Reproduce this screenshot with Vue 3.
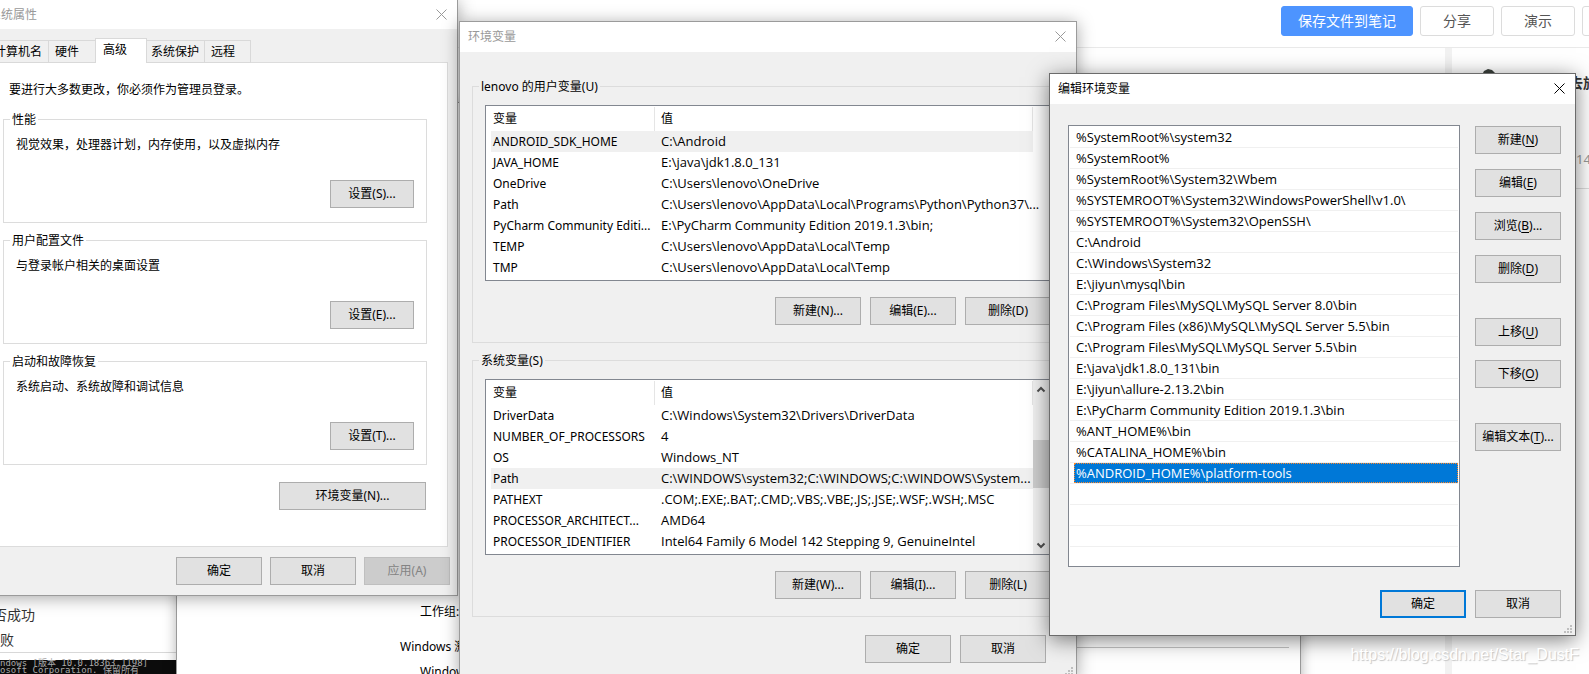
<script setup>
const tabs = ['计算机名', '硬件', '高级', '系统保护', '远程']
const activeTab = '高级'

const settings = [
  { title: '性能', text: '视觉效果，处理器计划，内存使用，以及虚拟内存', button: '设置(S)...' },
  { title: '用户配置文件', text: '与登录帐户相关的桌面设置', button: '设置(E)...' },
  { title: '启动和故障恢复', text: '系统启动、系统故障和调试信息', button: '设置(T)...' },
]

const groups = [
  {
    title: 'lenovo 的用户变量(U)',
    selected: 'ANDROID_SDK_HOME',
    scroll: false,
    buttons: ['新建(N)...', '编辑(E)...', '删除(D)'],
    rows: [
      ['ANDROID_SDK_HOME', 'C:\\Android'],
      ['JAVA_HOME', 'E:\\java\\jdk1.8.0_131'],
      ['OneDrive', 'C:\\Users\\lenovo\\OneDrive'],
      ['Path', 'C:\\Users\\lenovo\\AppData\\Local\\Programs\\Python\\Python37\\...'],
      ['PyCharm Community Editi...', 'E:\\PyCharm Community Edition 2019.1.3\\bin;'],
      ['TEMP', 'C:\\Users\\lenovo\\AppData\\Local\\Temp'],
      ['TMP', 'C:\\Users\\lenovo\\AppData\\Local\\Temp'],
    ],
  },
  {
    title: '系统变量(S)',
    selected: 'Path',
    scroll: true,
    buttons: ['新建(W)...', '编辑(I)...', '删除(L)'],
    rows: [
      ['DriverData', 'C:\\Windows\\System32\\Drivers\\DriverData'],
      ['NUMBER_OF_PROCESSORS', '4'],
      ['OS', 'Windows_NT'],
      ['Path', 'C:\\WINDOWS\\system32;C:\\WINDOWS;C:\\WINDOWS\\System...'],
      ['PATHEXT', '.COM;.EXE;.BAT;.CMD;.VBS;.VBE;.JS;.JSE;.WSF;.WSH;.MSC'],
      ['PROCESSOR_ARCHITECT...', 'AMD64'],
      ['PROCESSOR_IDENTIFIER', 'Intel64 Family 6 Model 142 Stepping 9, GenuineIntel'],
    ],
  },
]

const paths = [
  '%SystemRoot%\\system32',
  '%SystemRoot%',
  '%SystemRoot%\\System32\\Wbem',
  '%SYSTEMROOT%\\System32\\WindowsPowerShell\\v1.0\\',
  '%SYSTEMROOT%\\System32\\OpenSSH\\',
  'C:\\Android',
  'C:\\Windows\\System32',
  'E:\\jiyun\\mysql\\bin',
  'C:\\Program Files\\MySQL\\MySQL Server 8.0\\bin',
  'C:\\Program Files (x86)\\MySQL\\MySQL Server 5.5\\bin',
  'C:\\Program Files\\MySQL\\MySQL Server 5.5\\bin',
  'E:\\java\\jdk1.8.0_131\\bin',
  'E:\\jiyun\\allure-2.13.2\\bin',
  'E:\\PyCharm Community Edition 2019.1.3\\bin',
  '%ANT_HOME%\\bin',
  '%CATALINA_HOME%\\bin',
  '%ANDROID_HOME%\\platform-tools',
]
const selectedPath = paths.length - 1
const blankRows = 3

const actionGroups = [
  [
    { label: '新建', key: 'N', tail: '' },
    { label: '编辑', key: 'E', tail: '' },
    { label: '浏览', key: 'B', tail: '...' },
    { label: '删除', key: 'D', tail: '' },
  ],
  [
    { label: '上移', key: 'U', tail: '' },
    { label: '下移', key: 'O', tail: '' },
  ],
  [{ label: '编辑文本', key: 'T', tail: '...' }],
]
</script>

<template>
  <div class="desktop">
    <header class="toolbar">
      <button class="tool primary" type="button">保存文件到笔记</button>
      <button class="tool" type="button">分享</button>
      <button class="tool" type="button">演示</button>
      <button class="tool" type="button" aria-label="更多"></button>
    </header>

    <aside class="sidebar">
      <div class="author">
        <svg class="avatar" width="16" height="14" viewBox="0 0 16 14"><path d="M1 14V6l2-4 4-2 4 1 4 4v9z" /></svg>
        <strong class="name">去旅</strong>
      </div>
      <p class="date">14</p>
    </aside>

    <article class="note">
      <p>是否成功</p>
      <p>失败</p>
      <div class="console">
        <div>ndows [版本 10.0.18363.1198]</div>
        <div>osoft Corporation. 保留所有</div>
      </div>
    </article>

    <section class="sysinfo">
      <p class="workgroup">工作组:</p>
      <div class="activation"><span>Windows 激活</span><hr></div>
      <p class="workgroup">Windows</p>
    </section>

    <section class="window props" aria-label="系统属性">
      <div class="titlebar">
        <span>系统属性</span>
        <button class="close" type="button" aria-label="关闭">
          <svg width="11" height="11" viewBox="0 0 11 11"><path d="M.5.5l10 10M10.500.5l-10 10" /></svg>
        </button>
      </div>
      <div class="tabs" role="tablist">
        <button
          v-for="tab in tabs" :key="tab" type="button" role="tab"
          :class="['tab', { active: tab === activeTab }]" :aria-selected="tab === activeTab"
        >{{ tab }}</button>
      </div>
      <div class="panel">
        <p class="intro">要进行大多数更改，你必须作为管理员登录。</p>
        <div class="settings">
          <fieldset v-for="s in settings" :key="s.title" class="setting">
            <legend>{{ s.title }}</legend>
            <p>{{ s.text }}</p>
            <button class="btn narrow" type="button">{{ s.button }}</button>
          </fieldset>
        </div>
        <button class="btn env" type="button">环境变量(N)...</button>
      </div>
      <div class="props-footer">
        <button class="btn" type="button">确定</button>
        <button class="btn" type="button">取消</button>
        <button class="btn" type="button" disabled>应用(A)</button>
      </div>
    </section>

    <section class="window vars" aria-label="环境变量">
      <div class="titlebar">
        <span>环境变量</span>
        <button class="close" type="button" aria-label="关闭">
          <svg width="11" height="11" viewBox="0 0 11 11"><path d="M.5.5l10 10M10.500.5l-10 10" /></svg>
        </button>
      </div>
      <div class="vars-body">
        <fieldset v-for="g in groups" :key="g.title" class="group">
          <legend>{{ g.title }}</legend>
          <div class="listview">
            <table>
              <thead>
                <tr><th class="col-name">变量</th><th>值</th></tr>
              </thead>
              <tbody>
                <tr v-for="row in g.rows" :key="row[0]" :class="{ selected: row[0] === g.selected }">
                  <td>{{ row[0] }}</td><td class="value">{{ row[1] }}</td>
                </tr>
              </tbody>
            </table>
            <div v-if="g.scroll" class="scrollbar">
              <svg width="17" height="17" viewBox="0 0 17 17"><path d="M4.500 11.500l3.500-3.500 3.500 3.500" /></svg>
              <div class="thumb"></div>
              <svg width="17" height="17" viewBox="0 0 17 17"><path d="M4.500 6.500l3.500 3.500 3.500-3.500" /></svg>
            </div>
          </div>
          <div class="row-buttons">
            <button v-for="b in g.buttons" :key="b" class="btn" type="button">{{ b }}</button>
          </div>
        </fieldset>
      </div>
      <div class="vars-footer">
        <button class="btn" type="button">确定</button>
        <button class="btn" type="button">取消</button>
      </div>
      <svg class="grip" width="9" height="9" viewBox="0 0 9 9"><path d="M6 0h2v2H6zM3 3h2v2H3zM6 3h2v2H6zM0 6h2v2H0zM3 6h2v2H3zM6 6h2v2H6z" /></svg>
    </section>

    <section class="window edit" aria-label="编辑环境变量">
      <div class="titlebar">
        <span>编辑环境变量</span>
        <button class="close" type="button" aria-label="关闭">
          <svg width="11" height="11" viewBox="0 0 11 11"><path d="M.5.5l10 10M10.500.5l-10 10" /></svg>
        </button>
      </div>
      <div class="edit-body">
        <ul class="paths" role="listbox" aria-label="路径">
          <li
            v-for="(p, i) in paths" :key="p" role="option"
            :aria-selected="i === selectedPath" :class="{ current: i === selectedPath }"
          ><span>{{ p }}</span></li>
          <li v-for="n in blankRows" :key="'blank' + n" aria-hidden="true"></li>
        </ul>
        <div class="actions">
          <div v-for="(actions, i) in actionGroups" :key="i" class="action-group">
            <button v-for="a in actions" :key="a.key" class="btn" type="button">{{ a.label }}(<u>{{ a.key }}</u>){{ a.tail }}</button>
          </div>
        </div>
      </div>
      <div class="edit-footer">
        <button class="btn default" type="button">确定</button>
        <button class="btn" type="button">取消</button>
      </div>
      <svg class="grip" width="9" height="9" viewBox="0 0 9 9"><path d="M6 0h2v2H6zM3 3h2v2H3zM6 3h2v2H6zM0 6h2v2H0zM3 6h2v2H3zM6 6h2v2H6z" /></svg>
    </section>

    <div class="watermark">https://blog.csdn.net/Star_DustF</div>
  </div>
</template>

<style>
body {
  margin: 0;
}
</style>

<style scoped>
* {
  box-sizing: border-box;
}

.desktop {
  position: relative;
  height: 100vh;
  overflow: hidden;
  background: #fff;
  color: #000;
  font: 12px/16px "Noto Sans", "Noto Sans CJK SC", sans-serif;
}

p {
  margin: 0;
}

button {
  font: inherit;
  color: inherit;
  padding: 0;
}

/* note page */
.toolbar {
  display: flex;
  justify-content: flex-end;
  align-items: flex-start;
  gap: 7px;
  height: 48px;
  margin-right: -67px;
  padding-top: 6px;
  border-bottom: 1px solid #eaeaea;
}

.tool {
  width: 74px;
  height: 30px;
  border: 1px solid #dcdcdc;
  border-radius: 3px;
  background: #fff;
  color: #555;
  font-size: 14px;
}

.tool.primary {
  width: 132px;
  border-color: #4d94ff;
  background: #4d94ff;
  color: #fff;
}

.sidebar {
  position: absolute;
  top: 48px;
  right: 0;
  bottom: 0;
  width: 144px;
  border-left: 7px solid #f2f2f2;
  padding-top: 21px;
}

.author {
  display: flex;
  gap: 72px;
  padding-left: 29px;
  white-space: nowrap;
}

.avatar {
  flex: none;
  fill: #3a403c;
}

.name {
  color: #333;
  font-size: 14px;
  line-height: 28px;
}

.date {
  height: 70px;
  margin-top: 22px;
  padding: 32px 0 0 124px;
  border-bottom: 1px solid #ddd;
  color: #999;
  font-size: 13px;
}

.note {
  position: absolute;
  top: 602px;
  left: 0;
  width: 177px;
  overflow: hidden;
  color: #333;
  font-size: 14px;
  line-height: 25px;
}

.note p {
  margin-left: -21px;
}

.note p + p {
  margin-left: -14px;
  border-bottom: 1px solid #d8d8d8;
}

.console {
  height: 24px;
  margin-top: 7px;
  background: #0c0c0c;
  color: #aaa;
  font: 9px/7px "DejaVu Sans Mono", "Noto Sans CJK SC", monospace;
  white-space: nowrap;
}

.sysinfo {
  position: absolute;
  top: 102px;
  left: 176px;
  width: 1125px;
  padding: 501px 11px 20px 223px;
  border: 1px solid #999;
  background: #fff;
  box-shadow: 0 2px 12px rgba(0, 0, 0, 0.3);
}

.workgroup {
  padding-left: 20px;
}

.activation {
  display: flex;
  align-items: center;
  gap: 6px;
  height: 16px;
  margin: 19px 0 9px;
}

.activation hr {
  flex: 1;
  margin: 0;
  border: 0;
  border-top: 1px solid #c4c4c4;
}

/* dialogs */
.window {
  position: absolute;
  border: 1px solid #9b9b9b;
  background: #f0f0f0;
  box-shadow: 0 2px 16px rgba(0, 0, 0, 0.35);
}

.titlebar {
  display: flex;
  align-items: center;
  justify-content: space-between;
  height: 30px;
  padding: 0 10px 1px 8px;
  background: #fff;
  color: #999;
}

.close {
  display: flex;
  border: 0;
  background: none;
}

.close svg {
  fill: none;
  stroke: currentColor;
}

.btn {
  width: 86px;
  height: 28px;
  border: 1px solid #adadad;
  background: #e1e1e1;
}

.btn.narrow {
  width: 84px;
}

.btn.default {
  border: 2px solid #0078d7;
}

.btn:disabled {
  border-color: #bfbfbf;
  background: #ccc;
  color: #838383;
}

fieldset {
  min-width: 0;
  margin: 0;
  border: 1px solid #dcdcdc;
}

legend {
  margin-left: -6px;
  padding: 2px 2px 0;
}

.grip {
  position: absolute;
  right: 2px;
  bottom: 1px;
  fill: #bfbfbf;
}

/* system properties */
.props {
  top: -1px;
  left: -20px;
  width: 478px;
}

.props .titlebar {
  height: 29px;
  padding-bottom: 0;
}

.tabs {
  display: flex;
  align-items: flex-end;
  height: 34px;
  padding-left: 6px;
}

.tab {
  height: 23px;
  border: 1px solid #d9d9d9;
  border-right: 0;
  background: #f0f0f0;
  padding: 0 6px;
  text-align: left;
}

.tab:nth-child(1) {
  width: 61px;
}

.tab:nth-child(2) {
  width: 47px;
}

.tab:nth-child(4) {
  width: 57px;
  padding: 0 4px;
  border-left: 0;
}

.tab:last-child {
  width: 47px;
  border-right: 1px solid #d9d9d9;
}

.tab.active {
  z-index: 1;
  width: 52px;
  height: 25px;
  padding: 0 7px 2px;
  border-right: 1px solid #d9d9d9;
  border-bottom: 0;
  background: #fff;
}

.panel {
  display: flex;
  flex-direction: column;
  margin: -1px 9px 0;
  padding: 19px 20px 36px 12px;
  border: 1px solid #dcdcdc;
  background: #fff;
}

.intro {
  margin: 0 0 12px 6px;
}

.settings {
  display: grid;
  gap: 8px;
}

.setting {
  display: flex;
  flex-direction: column;
  padding: 9px 12px 14px;
}

.setting .btn {
  align-self: flex-end;
  margin-top: 27px;
}

.btn.env {
  align-self: flex-end;
  width: 147px;
  margin: 17px 1px 0 0;
}

.props-footer {
  display: flex;
  justify-content: flex-end;
  gap: 8px;
  padding: 10px 7px 10px;
}

/* environment variables */
.vars {
  top: 21px;
  left: 459px;
  width: 618px;
}

.vars-body {
  display: grid;
  gap: 8px;
  padding: 25px 12px 0;
}

.group {
  padding: 10px 12px 17px;
}

.listview {
  display: flex;
  justify-content: space-between;
  border: 1px solid #828790;
  background: #fff;
}

.listview table {
  width: 542px;
  margin: 1px 0 2px 5px;
  border-collapse: separate;
  border-spacing: 0;
  table-layout: fixed;
}

.listview th {
  height: 24px;
  padding: 0 0 0 6px;
  border-right: 1px solid #e5e5e5;
  font-weight: 400;
  text-align: left;
}

.listview .col-name {
  width: 164px;
}

.listview td {
  height: 21px;
  padding: 0 0 0 6px;
  white-space: nowrap;
}

.listview .value {
  padding-bottom: 1px;
  font-family: "Open Sans", "Noto Sans CJK SC", sans-serif;
  font-size: 13px;
}

.listview th:first-child,
.listview td:first-child {
  padding-left: 2px;
}

.selected td {
  background: #f0f0f0;
}

.scrollbar {
  display: flex;
  flex-direction: column;
  width: 17px;
  background: #f0f0f0;
}

.scrollbar svg {
  fill: none;
  stroke: #505050;
  stroke-width: 2;
}

.thumb {
  height: 48px;
  margin: 43px 0 auto;
  background: #cdcdcd;
}

.row-buttons {
  display: flex;
  justify-content: flex-end;
  gap: 9px;
  margin-top: 16px;
}

.vars-footer {
  display: flex;
  justify-content: flex-end;
  gap: 9px;
  padding: 18px 30px 14px;
}

/* edit environment variable */
.edit {
  top: 73px;
  left: 1049px;
  width: 527px;
  border-color: #6b6b6b;
  box-shadow: 0 4px 20px rgba(0, 0, 0, 0.5);
}

.edit .titlebar {
  color: #000;
}

.edit-body {
  display: flex;
  gap: 15px;
  padding: 21px 14px 0 18px;
}

.paths {
  flex: 1;
  margin: 0;
  padding: 1px 1px 19px;
  border: 1px solid #828790;
  background: #fff;
  list-style: none;
  font-family: "Open Sans", "Noto Sans CJK SC", sans-serif;
  font-size: 13px;
}

.paths li {
  height: 21px;
  padding-left: 4px;
  border-bottom: 1px solid #f0f0f0;
  line-height: 20px;
  white-space: nowrap;
}

.paths span {
  display: block;
  padding-left: 2px;
}

.current span {
  height: 20px;
  outline: 1px dotted #ff8728;
  outline-offset: -1px;
  background: #0078d7;
  color: #fff;
}

.actions {
  padding-top: 1px;
}

.action-group {
  display: grid;
  gap: 15px;
}

.action-group + .action-group {
  gap: 14px;
  margin-top: 35px;
}

.action-group u {
  text-underline-offset: 2px;
}

.edit-footer {
  display: flex;
  justify-content: flex-end;
  gap: 9px;
  padding: 23px 14px 17px;
}

.watermark {
  position: absolute;
  right: 10px;
  bottom: 9px;
  color: #fff;
  font: 16px/20px "Liberation Sans", Arial, sans-serif;
  text-shadow: 1px 1px 1px #c4c4c4;
}
</style>
